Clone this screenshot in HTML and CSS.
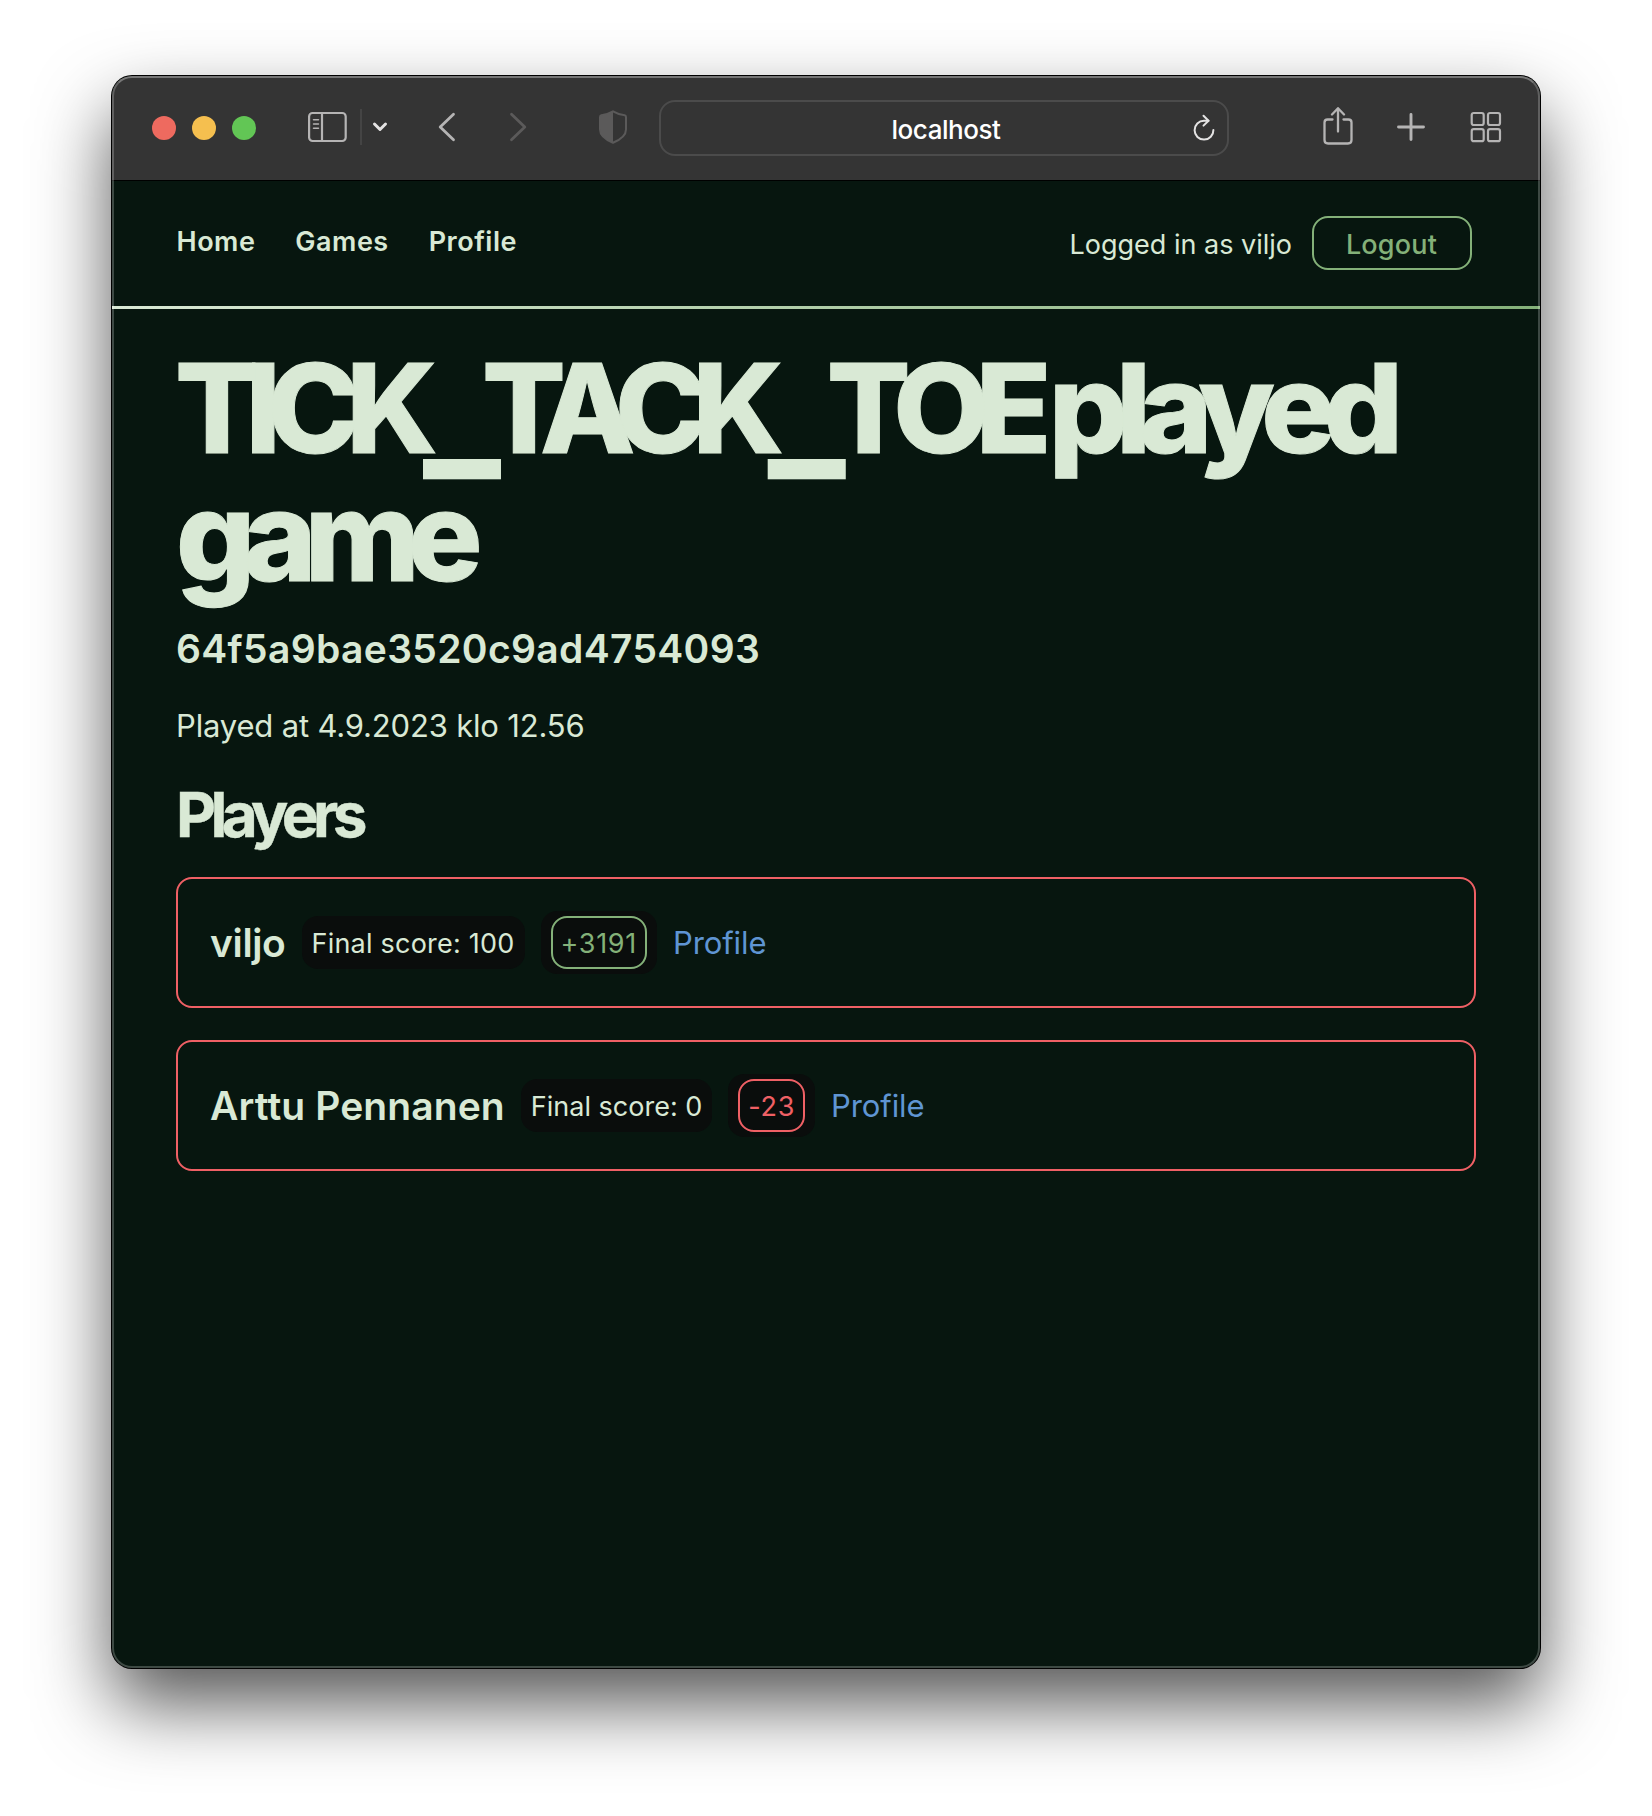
FILE: index.html
```html
<!DOCTYPE html>
<html lang="en">
<head>
<meta charset="utf-8">
<title>Played game</title>
<link rel="stylesheet" href="styles.css">
</head>
<body>
<div class="window">
  <div class="toolbar">
    <div class="lights"><span class="light red"></span><span class="light yellow"></span><span class="light green"></span></div>
    <svg class="icon sidebar" width="40" height="32" viewBox="0 0 40 32" fill="none" stroke="#b5b4b4" stroke-width="2.2"><rect x="1.1" y="2" width="36.6" height="28" rx="3.5"/><path d="M14 2v28"/><path d="M5.5 8.7h5M5.5 13h5M5.5 17.3h5" stroke-width="1.5" stroke-linecap="round"/></svg>
    <span class="rule"></span>
    <svg class="icon chevron" width="16" height="12" viewBox="0 0 16 12" fill="none" stroke="#e4e3e3" stroke-width="3" stroke-linecap="round" stroke-linejoin="round"><path d="M2.5 3 8 8.5 13.5 3"/></svg>
    <svg class="icon back" width="18" height="30" viewBox="0 0 18 30" fill="none" stroke="#b5b4b4" stroke-width="2.8" stroke-linecap="round" stroke-linejoin="round"><path d="M15.5 2.2 2.2 15l13.3 12.8"/></svg>
    <svg class="icon forward" width="18" height="30" viewBox="0 0 18 30" fill="none" stroke="#5b5a5a" stroke-width="2.8" stroke-linecap="round" stroke-linejoin="round"><path d="M2.5 2.2 15.8 15 2.5 27.8"/></svg>
    <svg class="icon shield" width="28" height="34" viewBox="0 0 28 34"><path d="M14 1.3C10.5 3.4 6.5 4.6 2.3 5.2Q1 5.5 1 7v12.5C1 25.5 6 29.5 14 32.7 22 29.5 27 25.5 27 19.5V7q0-1.5-1.3-1.8C21.5 4.6 17.5 3.4 14 1.3Z" fill="none" stroke="#5b5a5a" stroke-width="2"/><path d="M14 1.3C10.5 3.4 6.5 4.6 2.3 5.2Q1 5.5 1 7v12.5C1 25.5 6 29.5 14 32.7Z" fill="#5b5a5a"/></svg>
    <div class="address"><span>localhost</span>
      <svg class="reload" width="24" height="28" viewBox="0 0 24 28" fill="none" stroke="#e4e3e3" stroke-width="2" stroke-linecap="round" stroke-linejoin="round"><path d="M16.5 6.8H12A9.4 9.4 0 1 0 21.4 16"/><path d="M11.5 1.8 16.5 6.8 11.5 11.6"/></svg>
    </div>
    <svg class="icon share" width="30" height="40" viewBox="0 0 30 40" fill="none" stroke="#b5b4b4" stroke-width="2.3" stroke-linecap="round" stroke-linejoin="round"><path d="M9.5 12.5H4.6Q1.5 12.5 1.5 15.5v17.5q0 3.5 3.5 3.5h20q3.5 0 3.5-3.5V15.5q0-3-3.1-3h-4.9M15 24.5V1.5M9 7.5l6-6.3 6 6.3"/></svg>
    <svg class="icon plus" width="28" height="28" viewBox="0 0 28 28" fill="none" stroke="#b5b4b4" stroke-width="2.9" stroke-linecap="round"><path d="M14 1.5v25M1.5 14h25"/></svg>
    <svg class="icon grid" width="32" height="32" viewBox="0 0 32 32" fill="none" stroke="#b5b4b4" stroke-width="2.2"><rect x="1.7" y="2" width="12" height="12" rx="2"/><rect x="18" y="2" width="12" height="12" rx="2"/><rect x="1.7" y="18.2" width="12" height="12" rx="2"/><rect x="18" y="18.2" width="12" height="12" rx="2"/></svg>
  </div>
  <header class="nav">
    <nav class="links"><a>Home</a><a>Games</a><a>Profile</a></nav>
    <div class="session"><span class="who">Logged in as viljo</span><button class="logout">Logout</button></div>
  </header>
  <main class="content">
    <h1 class="title">TICK<span class="underscore">_</span><span class="tack">TACK</span><span class="underscore">_</span>TOE <span class="lower">played game</span></h1>
    <p class="game-id">64f5a9bae3520c9ad4754093</p>
    <p class="played">Played at 4.9.2023 klo 12.56</p>
    <h2 class="subtitle">Players</h2>
    <ul class="players">
      <li class="player"><span class="name short">viljo</span><span class="badge wide">Final score: 100</span><span class="badge delta"><span class="pill gain">+3191</span></span><a class="link">Profile</a></li>
      <li class="player"><span class="name">Arttu Pennanen</span><span class="badge">Final score: 0</span><span class="badge delta"><span class="pill loss">-23</span></span><a class="link">Profile</a></li>
    </ul>
  </main>
</div>
</body>
</html>
```
FILE: styles.css
```css
* { box-sizing: border-box; }
body { margin: 0; background: #fff; font-family: Inter, "Liberation Sans", sans-serif; color: #d9e9d5; }
.window { position: relative; width: 1428px; height: 1592px; margin: 76px 112px 148px; border-radius: 20px; background: #07160f; box-shadow: 0 0 0 1px #000, 0 36px 75px rgba(0,0,0,.67); }
.window::after { content: ""; position: absolute; inset: 0; border-radius: 20px; border: 2px solid rgba(255,255,255,.22); border-top-color: rgba(255,255,255,.33); pointer-events: none; }
.toolbar { display: flex; align-items: center; height: 105px; padding: 0 38px 2px 40px; background: #343434; border-bottom: 1px solid #000; border-radius: 20px 20px 0 0; }
.icon { flex: none; display: block; }
.lights { display: flex; gap: 16px; margin-top: 2px; }
.light { width: 24px; height: 24px; border-radius: 50%; }
.red { background: #ee6a5f; }
.yellow { background: #f5bf4f; }
.green { background: #62c655; }
.sidebar { margin-left: 52px; }
.rule { width: 2px; height: 36px; margin-left: 12px; background: #444; }
.chevron { margin-left: 10px; }
.back { margin-left: 50px; }
.forward { margin-left: 53px; }
.shield { margin-left: 72px; }
.address { display: flex; align-items: center; justify-content: center; position: relative; width: 570px; height: 56px; margin: 2px 0 0 32px; padding: 2px 0 0 4px; border: 2px solid #4b4b4b; border-radius: 16px; color: #fff; font-size: 26px; font-weight: 500; letter-spacing: -.45px; }
.reload { position: absolute; right: 11px; top: 12px; }
.share { margin-left: auto; }
.plus { margin-left: 44px; }
.grid { margin-left: 45px; }
.nav { display: flex; align-items: center; justify-content: space-between; height: 128px; padding: 0 68px 0 64px; border-bottom: 3px solid; border-image: linear-gradient(90deg, #d9e9d5, #84b179) 1; }
.links { display: flex; gap: 40px; padding: 0 0 5px .5px; font-size: 27px; font-weight: 600; letter-spacing: .5px; }
.session { display: flex; align-items: center; gap: 20px; padding-bottom: 1px; font-size: 27px; }
.who { padding-top: 3px; }
.logout { width: 160px; height: 54px; padding: 2px 1px 0 0; border: 2px solid #84b179; border-radius: 16px; background: none; color: #84b179; font: 500 27px Inter, "Liberation Sans", sans-serif; letter-spacing: .2px; }
.content { padding: 35px 64px; }
.title, .subtitle, .game-id, .played { margin: 0; }
.title { font-size: 124px; line-height: 128px; font-weight: 800; letter-spacing: -13.4px; word-spacing: -3px; text-indent: -1px; -webkit-text-stroke: 1px #d9e9d5; }
.tack { letter-spacing: -14.8px; }
.lower { letter-spacing: -11.7px; }
.underscore { margin: 0 -5.5px 0 -1.5px; font-size: 161px; line-height: 0; vertical-align: -6px; -webkit-text-stroke: 0; }
.game-id { margin-top: 25px; font-size: 39px; line-height: 48px; font-weight: 600; letter-spacing: .34px; }
.played { margin-top: 29px; font-size: 31px; line-height: 48px; letter-spacing: -.17px; }
.subtitle { margin-top: 33px; font-size: 62px; line-height: 64px; font-weight: 700; letter-spacing: -5.6px; -webkit-text-stroke: .4px #d9e9d5; }
.players { display: grid; gap: 32px; margin: 30px 0 0; padding: 0; list-style: none; }
.player { display: flex; align-items: center; height: 131px; padding: 0 32px; border: 2px solid #ef6065; border-radius: 16px; }
.name { font-size: 39px; font-weight: 600; letter-spacing: .1px; }
.short { letter-spacing: -.35px; }
.badge { height: 53px; margin-left: 16px; padding: 0 10px; border-radius: 16px; background: #0a0d0c; font-size: 27px; line-height: 55px; }
.wide { letter-spacing: .22px; }
.delta { height: 63px; padding: 5px 10px; letter-spacing: .7px; }
.pill { display: block; height: 53px; padding: 0 8px; border: 2px solid; border-radius: 16px; line-height: 51px; }
.gain { color: #84b179; }
.loss { color: #ef6065; }
.link { margin-left: 16px; color: #5f95d3; font-size: 31px; letter-spacing: -.1px; }
```
